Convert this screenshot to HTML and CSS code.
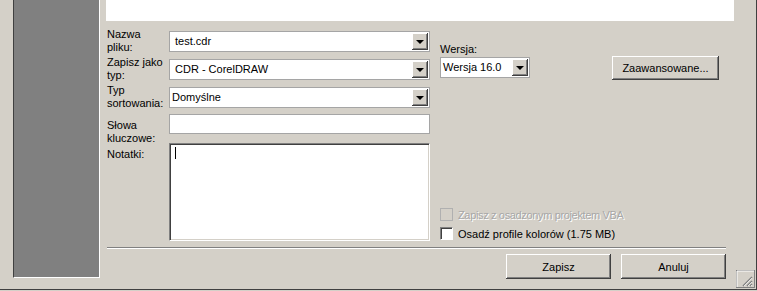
FILE: index.html
```html
<!DOCTYPE html>
<html lang="pl">
<head>
  <meta charset="UTF-8" />
  <title>Zapisz rysunek</title>
  <link rel="stylesheet" href="styles.css">
</head>
<body>

  <div class="window">
    <div class="sidebar"></div>

    <div class="main">
      <div class="preview"></div>

      <div class="content">
        <div class="fields">
          <div class="lbl">Nazwa<br>pliku:</div>
          <div class="combo wide top3"><span>test.cdr</span><i class="drop"></i></div>

          <div class="lbl">Zapisz jako<br>typ:</div>
          <div class="combo wide top3"><span>CDR - CorelDRAW</span><i class="drop"></i></div>

          <div class="lbl">Typ<br>sortowania:</div>
          <div class="combo wide top3"><span class="tight">Domyślne</span><i class="drop"></i></div>

          <div class="lbl top5">Słowa<br>kluczowe:</div>
          <div class="field"></div>

          <div class="lbl top5">Notatki:</div>
          <div class="notes"><i class="caret"></i></div>
        </div>

        <div class="side">
          <div class="version-row">
            <div class="version">
              <div class="lbl">Wersja:</div>
              <div class="combo small"><span class="tight">Wersja 16.0</span><i class="drop"></i></div>
            </div>
            <button class="btn adv">Zaawansowane...</button>
          </div>

          <div class="checks">
            <label class="check disabled"><span class="box"></span>Zapisz z osadzonym projektem VBA</label>
            <label class="check"><span class="box"></span>Osadź profile kolorów (1.75 MB)</label>
          </div>
        </div>
      </div>

      <div class="sep"></div>

      <div class="actions">
        <button class="btn">Zapisz</button>
        <button class="btn">Anuluj</button>
      </div>
    </div>

    <svg class="grip" width="19" height="18" viewBox="0 0 19 18">
      <rect x="0.5" y="0.5" width="18" height="17" fill="#d4d0c8" stroke="#808080" />
      <path d="M1 17V1h17" fill="none" stroke="#fff" />
      <path d="M7 16L16 7M11 16L16 11M14 16L16 14" stroke="#808080" stroke-width="1.5" />
      <path d="M8 16L16 8M12 16L16 12M15 16L16 15" stroke="#fff" stroke-width="0.7" />
    </svg>
  </div>

</body>
</html>
```

FILE: styles.css
```css
body {
  margin: 0;
  background: #d4d0c8;
  font-family: "Liberation Sans", Arial, sans-serif;
  font-size: 11px;
  color: #000;
}

.window {
  position: relative;
  display: flex;
  width: 756px;
  height: 289px;
  border-right: 1px solid #404040;
  border-bottom: 1px solid #404040;
}

.sidebar {
  margin-left: 13px;
  width: 85px;
  height: 277px;
  background: #808080;
  border-left: 1px solid #404040;
  border-right: 1px solid #fff;
  border-bottom: 1px solid #fff;
}

.main {
  flex: 1;
  display: flex;
  flex-direction: column;
}

.preview {
  margin-left: 6px;
  width: 628px;
  height: 21px;
  background: #fff;
}

.content {
  display: flex;
  margin: 7px 0 0 7px;
  height: 219px;
}

.fields {
  display: grid;
  grid-template-columns: 62px 261px;
  grid-template-rows: 28px 28px 30px 29px 98px;
  align-items: start;
}

.lbl {
  line-height: 13px;
}

.top3 { margin-top: 3px; }
.top5 { margin-top: 5px; }

.combo {
  position: relative;
  box-sizing: border-box;
  height: 21px;
  background: #fff;
  border: 1px solid #a5a5a5;
  line-height: 19px;
  padding-left: 5px;
}

.combo .tight {
  margin-left: -3px;
}

.combo.small {
  width: 90px;
  margin-top: 1px;
}

.drop {
  position: absolute;
  top: 1px;
  right: 1px;
  width: 16px;
  height: 17px;
  box-sizing: border-box;
  background: #d4d0c8;
  box-shadow: inset -1px -1px #404040, inset 1px 1px #fff, inset -2px -2px #808080;
}

.drop::after {
  content: "";
  position: absolute;
  left: 4px;
  top: 7px;
  border-left: 4px solid transparent;
  border-right: 4px solid transparent;
  border-top: 4px solid #000;
}

.field {
  box-sizing: border-box;
  height: 20px;
  background: #fff;
  border: 1px solid #a5a5a5;
}

.notes {
  position: relative;
  box-sizing: border-box;
  height: 98px;
  background: #fff;
  border-top: 1px solid #808080;
  border-left: 1px solid #808080;
  border-right: 1px solid #fff;
  border-bottom: 1px solid #fff;
  box-shadow: inset 1px 1px #404040, inset -1px -1px #d4d0c8;
}

.caret {
  position: absolute;
  left: 5px;
  top: 3px;
  width: 1px;
  height: 12px;
  background: #000;
}

.side {
  display: flex;
  flex-direction: column;
  margin-left: 10px;
  width: 287px;
}

.version-row {
  display: flex;
  padding-top: 15px;
}

.btn {
  box-sizing: border-box;
  width: 105px;
  height: 25px;
  padding: 0;
  border: none;
  background: #d4d0c8;
  font-family: inherit;
  font-size: 11px;
  color: #000;
  box-shadow: inset -1px -1px #404040, inset 1px 1px #fff, inset -2px -2px #808080;
}

.btn.adv {
  width: 107px;
  height: 24px;
  margin: 13px 0 0 82px;
}

.checks {
  margin-top: auto;
  padding-bottom: 4px;
}

.check {
  display: flex;
  align-items: center;
  height: 19px;
}

.box {
  box-sizing: border-box;
  width: 13px;
  height: 13px;
  margin-right: 5px;
  background: #fff;
  border-top: 1px solid #808080;
  border-left: 1px solid #808080;
  border-right: 1px solid #fff;
  border-bottom: 1px solid #fff;
  box-shadow: inset 1px 1px #404040;
}

.check.disabled {
  color: #a7a7a7;
  letter-spacing: -0.35px;
  text-shadow: 1px 1px #fff;
}

.check.disabled .box {
  background: #d4d0c8;
  border-color: #b0b0b0;
  box-shadow: none;
}

.sep {
  margin-left: 7px;
  width: 619px;
  height: 1px;
  background: #808080;
  border-bottom: 1px solid #fff;
}

.actions {
  display: flex;
  justify-content: flex-end;
  gap: 10px;
  margin-top: 5px;
  width: 626px;
}

.grip {
  position: absolute;
  left: 736px;
  top: 270px;
}
```
